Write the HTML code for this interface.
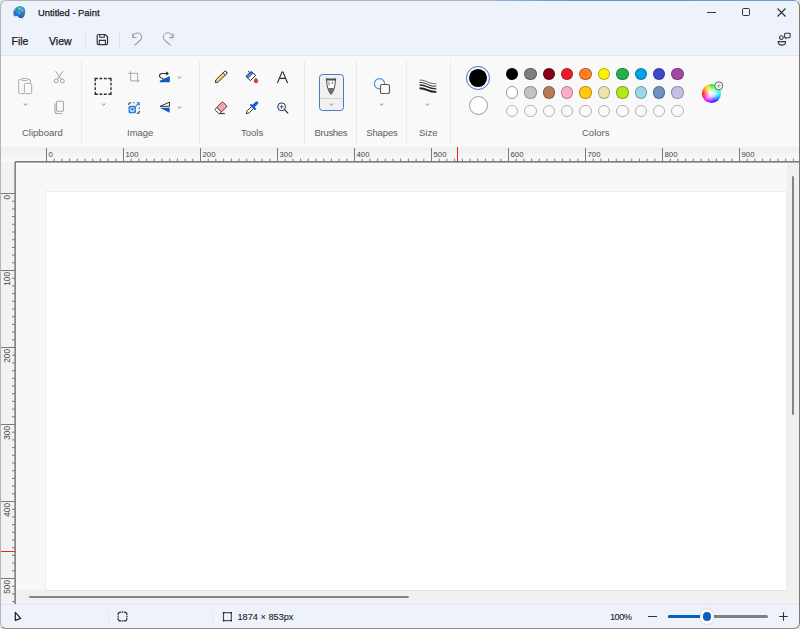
<!DOCTYPE html>
<html><head><meta charset="utf-8">
<style>
*{margin:0;padding:0;box-sizing:border-box}
html,body{width:800px;height:629px;overflow:hidden;background:#e6e6e8;font-family:"Liberation Sans",sans-serif}
#win{position:absolute;left:0;top:0;width:800px;height:629px;background:#eef2fa;border-radius:5px 5px 5px 5px;overflow:hidden}
#frame{position:absolute;left:0;top:0;width:800px;height:629px;border:1px solid #b4b4b6;border-right-color:#7f7a68;border-bottom-color:#8e8b80;border-radius:6px;pointer-events:none}
.t{position:absolute;white-space:nowrap;color:#1b1b1b;line-height:1;-webkit-text-stroke:0.25px currentColor}
.ic{position:absolute;overflow:visible}
#ribbon{position:absolute;left:0;top:55px;width:800px;height:92px;background:#f9f9f9;border-top:1px solid #e4e8ee}
.sep{position:absolute;width:1px;background:#ececec}
.lbl{position:absolute;font-size:9.5px;color:#5c5c5c;white-space:nowrap;top:128.4px;line-height:1}
#rulerH{position:absolute;left:0;top:147px;width:800px;height:16px;background:linear-gradient(#f1f1f1 0,#f2f2f2 30%,#f9f9f9 85%)}
#rulerV{position:absolute;left:0;top:162px;width:16px;height:442px;background:#f2f2f2}
#work{position:absolute;left:16px;top:163px;width:783px;height:441px;background:#f8f8f8}
#canvas{position:absolute;left:46px;top:192px;width:740px;height:398px;background:#fff;box-shadow:0 0 0 0.6px rgba(0,0,0,.09)}
#status{position:absolute;left:0;top:604px;width:800px;height:25px;background:#eef2fa;border-top:1px solid #e4e7ed}
.sw{position:absolute;width:12px;height:12px;border-radius:50%;border:1px solid rgba(0,0,0,.18)}
.so{border:1px solid #a5a5a5;background:#fafafa}
.chev{position:absolute;width:5px;height:3px}
</style></head>
<body>
<div id="win">
  <!-- title bar -->
  <svg class="ic" style="left:12px;top:5px" width="16" height="14" viewBox="0 0 16 14">
    <defs><linearGradient id="pg" x1="0" y1="0" x2="0.3" y2="1"><stop offset="0" stop-color="#3cbaf2"/><stop offset="0.55" stop-color="#1e9be8"/><stop offset="1" stop-color="#0a62d2"/></linearGradient></defs>
    <path d="M1.2 9 C0.8 6 2.5 2.5 6.5 1.2 C9.5 0.3 12.3 1.5 13 4.5 C13.4 6.5 13.2 9.5 11.8 11.8 C10.8 13.2 8.5 13.5 7 12.6 C6.2 12 6 11 5.2 10.9 C4.3 10.8 3.6 11.6 2.6 11.2 C1.8 10.9 1.3 10 1.2 9Z" fill="url(#pg)"/>
    <circle cx="3.3" cy="7.7" r="1.15" fill="#f01818"/>
    <circle cx="4.8" cy="4.6" r="1.05" fill="#1c9a1c"/>
    <path d="M6.8 3.3 A1.1 1.1 0 0 0 8.7 4.3 L9.2 3Z" fill="#f7b500"/>
    <circle cx="7.6" cy="3.7" r="1" fill="#f7b500"/>
    <ellipse cx="7.4" cy="8.3" rx="0.5" ry="0.8" fill="#cfeaff"/>
    <rect x="9.8" y="6.2" width="1.2" height="7.2" fill="#c8561a"/>
    <path d="M9.3 5.3 H11.6 L10.9 6.6 H10Z" fill="#e8b888"/>
  </svg>
  <div class="t" style="left:38px;top:8.3px;font-size:9.4px">Untitled - Paint</div>
  <!-- window controls -->
  <div style="position:absolute;left:707px;top:11.5px;width:8.5px;height:1.2px;background:#333"></div>
  <div style="position:absolute;left:742px;top:8px;width:8.2px;height:7.8px;border:1.2px solid #333;border-radius:1.5px"></div>
  <svg class="ic" style="left:777px;top:7.5px" width="9" height="9" viewBox="0 0 9 9"><path d="M0.5 0.5 L8.5 8.5 M8.5 0.5 L0.5 8.5" stroke="#2b2b2b" stroke-width="1.1"/></svg>

  <!-- menu -->
  <div class="t" style="left:11.5px;top:36.4px;font-size:10.5px">File</div>
  <div class="t" style="left:49px;top:36.4px;font-size:10.5px">View</div>
  <div class="sep" style="left:85px;top:31px;height:17px;background:#dfe2e8"></div>
  <div class="sep" style="left:119px;top:31px;height:17px;background:#dfe2e8"></div>
  <!-- save -->
  <svg class="ic" style="left:96px;top:33px" width="13" height="13" viewBox="0 0 13 13">
    <path d="M2.3 1.5 H9.2 L11.5 3.8 V10.5 A1.1 1.1 0 0 1 10.4 11.6 H2.3 A1.1 1.1 0 0 1 1.2 10.5 V2.6 A1.1 1.1 0 0 1 2.3 1.5Z" fill="none" stroke="#333" stroke-width="1.2"/>
    <path d="M3.8 1.6 V4.3 H8.3 V1.6" fill="none" stroke="#333" stroke-width="1.1"/>
    <path d="M3.3 11.5 V7.4 H9.4 V11.5" fill="none" stroke="#333" stroke-width="1.1"/>
  </svg>
  <!-- undo -->
  <svg class="ic" style="left:131px;top:32px" width="14" height="14" viewBox="0 0 14 14">
    <path d="M2 5.3 A4.3 4.3 0 0 1 10.6 5.3 C10.6 6.5 10.2 7.2 9.4 8 L4 13" fill="none" stroke="#9d9d9d" stroke-width="1.1" stroke-linecap="round"/>
    <path d="M1.8 1.8 V5.5 H5" fill="none" stroke="#9d9d9d" stroke-width="1.1" stroke-linecap="round" stroke-linejoin="round"/>
  </svg>
  <!-- redo -->
  <svg class="ic" style="left:160px;top:32px" width="15" height="14" viewBox="0 0 15 14">
    <path d="M12.5 5.4 A4.6 4.6 0 0 0 3.3 5.4 C3.3 6.6 3.8 7.3 4.6 8.1 L10.2 13" fill="none" stroke="#9d9d9d" stroke-width="1.1" stroke-linecap="round"/>
    <path d="M13.2 1.8 V5.6 H9.6" fill="none" stroke="#9d9d9d" stroke-width="1.1" stroke-linecap="round" stroke-linejoin="round"/>
  </svg>
  <!-- share -->
  <svg class="ic" style="left:777px;top:32px" width="15" height="15" viewBox="0 0 15 15">
    <circle cx="4.4" cy="5.6" r="1.9" fill="none" stroke="#333" stroke-width="1.05"/>
    <path d="M1.1 9.6 H8.6 C8.6 12 7 13.1 4.85 13.1 C2.7 13.1 1.1 12 1.1 9.6Z" fill="none" stroke="#333" stroke-width="1.1" stroke-linejoin="round"/>
    <path d="M8.3 1.3 H12.3 A0.8 0.8 0 0 1 13.1 2.1 V4.9 A0.8 0.8 0 0 1 12.3 5.7 H9.6 L8.6 6.6 V5.7 A0.8 0.8 0 0 1 7.6 4.9 V2.1 A0.8 0.8 0 0 1 8.3 1.3Z" fill="none" stroke="#333" stroke-width="1.05" stroke-linejoin="round"/>
  </svg>

  <div id="ribbon"></div>
  <div class="sep" style="left:81px;top:60px;height:85px"></div>
  <div class="sep" style="left:199px;top:60px;height:85px"></div>
  <div class="sep" style="left:304px;top:60px;height:85px"></div>
  <div class="sep" style="left:356px;top:60px;height:85px"></div>
  <div class="sep" style="left:406px;top:60px;height:85px"></div>
  <div class="sep" style="left:450px;top:60px;height:85px"></div>

  <!-- clipboard group -->
  <svg class="ic" style="left:17px;top:77px" width="17" height="18" viewBox="0 0 17 18">
    <path d="M4.4 2.4 H3.3 A1.6 1.6 0 0 0 1.7 4 V15 A1.6 1.6 0 0 0 3.3 16.6 H7" fill="none" stroke="#ababab" stroke-width="1"/>
    <path d="M10.6 2.4 H11.8 A1.6 1.6 0 0 1 13.4 4 V5.8" fill="none" stroke="#ababab" stroke-width="1"/>
    <rect x="4.6" y="1.5" width="6" height="2.1" rx="1" fill="none" stroke="#ababab" stroke-width="1"/>
    <rect x="7.4" y="6.4" width="7.3" height="10.2" rx="1.3" fill="none" stroke="#ababab" stroke-width="1"/>
  </svg>
  <svg class="chev" style="left:23px;top:103px" width="6" height="4" viewBox="0 0 6 4"><path d="M0.6 0.7 L3 3 L5.4 0.7" fill="none" stroke="#666" stroke-width="1.05"/></svg>
  <svg class="ic" style="left:53px;top:70px" width="13" height="14" viewBox="0 0 13 14">
    <path d="M2.6 1.1 L8.1 9.3 M10 1.1 L4.5 9.3" fill="none" stroke="#9e9e9e" stroke-width="0.95"/>
    <circle cx="3.3" cy="10.9" r="1.95" fill="none" stroke="#9e9e9e" stroke-width="0.95"/>
    <circle cx="9.3" cy="10.9" r="1.95" fill="none" stroke="#9e9e9e" stroke-width="0.95"/>
  </svg>
  <svg class="ic" style="left:53px;top:100px" width="12" height="15" viewBox="0 0 12 15">
    <rect x="3.5" y="1.2" width="7" height="10" rx="1.3" fill="none" stroke="#a9a9a9" stroke-width="1.1"/>
    <path d="M2 3.5 V11.5 A2 2 0 0 0 4 13.5 H9" fill="none" stroke="#a9a9a9" stroke-width="1.1"/>
  </svg>

  <!-- image group -->
  <svg class="ic" style="left:94px;top:77px" width="19" height="19" viewBox="0 -0.3 19 19">
    <path d="M1.25 3.85 V1.25 H3.85 M14.34 1.25 H16.95 V3.85 M16.95 14.34 V16.95 H14.34 M3.85 16.95 H1.25 V14.34 M5.48 1.25 H8.28 M5.48 16.95 H8.28 M1.25 5.48 V8.28 M16.95 5.48 V8.28 M9.91 1.25 H12.71 M9.91 16.95 H12.71 M1.25 9.91 V12.71 M16.95 9.91 V12.71" fill="none" stroke="#2e2e2e" stroke-width="1.4"/>
  </svg>
  <svg class="chev" style="left:101px;top:103px" width="6" height="4" viewBox="0 0 6 4"><path d="M0.6 0.7 L3 3 L5.4 0.7" fill="none" stroke="#666" stroke-width="1.05"/></svg>
  <svg class="ic" style="left:127px;top:70px" width="14" height="14" viewBox="0 0 14 14">
    <path d="M1.2 3.3 H10.6 V12.5 M3.6 1.2 V10.8 H12.9" fill="none" stroke="#a9a9a9" stroke-width="1"/>
  </svg>
  <svg class="ic" style="left:158px;top:70px" width="14" height="14" viewBox="0 0 14 14">
    <path d="M1.8 10.7 V12.2 H11.8 V6.1Z" fill="#0c5bc4"/>
    <path d="M5.3 8.6 C3.2 8.2 1.4 7.3 1.5 5.6 C1.6 4.1 3 3.5 4.6 3.5 H9.8" fill="none" stroke="#2a2a2a" stroke-width="1.1"/>
    <path d="M8.3 1.8 L10 3.5 L8.3 5.2" fill="none" stroke="#2a2a2a" stroke-width="1.15"/>
  </svg>
  <svg class="chev" style="left:177px;top:76px" width="6" height="4" viewBox="0 0 6 4"><path d="M0.6 0.7 L3 3 L5.4 0.7" fill="none" stroke="#666" stroke-width="1.05"/></svg>
  <svg class="ic" style="left:127px;top:101px" width="14" height="14" viewBox="0 0 14 14">
    <path d="M1.7 4 V3.5 A1.8 1.8 0 0 1 3.5 1.7 H4.3 M6.3 1.7 H7.5 M12.3 6.5 V7.7 M12.3 9.7 V10.5 A1.8 1.8 0 0 1 10.5 12.3 H9.8" fill="none" stroke="#333" stroke-width="1.1"/>
    <rect x="1.5" y="4.8" width="7.5" height="7.5" rx="1.6" fill="#2b7fdb"/>
    <circle cx="5.25" cy="8.5" r="2.1" fill="none" stroke="#fff" stroke-width="0.8"/>
    <path d="M3.6 10.6 L5.25 8.9 L6.9 10.6" fill="none" stroke="#fff" stroke-width="0.7"/>
    <path d="M8.6 5.4 L11.8 2.2 M9.6 1.8 H12.2 V4.4" fill="none" stroke="#2b7fdb" stroke-width="1.05"/>
  </svg>
  <svg class="ic" style="left:158px;top:100px" width="14" height="15" viewBox="0 0 14 15">
    <path d="M2.2 6.3 L11.5 2.1 V6.3Z" fill="none" stroke="#2a2a2a" stroke-width="0.95" stroke-linejoin="round"/>
    <path d="M1.8 7.8 H11.6 V12.8Z" fill="#0c5bc4"/>
  </svg>
  <svg class="chev" style="left:177px;top:106px" width="6" height="4" viewBox="0 0 6 4"><path d="M0.6 0.7 L3 3 L5.4 0.7" fill="none" stroke="#666" stroke-width="1.05"/></svg>

  <!-- tools group -->
  <svg class="ic" style="left:214px;top:70px" width="14" height="14" viewBox="0 0 14 14">
    <path d="M1.3 12.6 L1.84 9.85 L10.19 1.75 A1.6 1.6 0 0 1 12.41 4.05 L4.06 12.15Z" fill="#f6d27a" stroke="#2e2e2e" stroke-width="0.95" stroke-linejoin="round"/>
    <path d="M10.19 1.75 A1.6 1.6 0 0 1 12.41 4.05 L11.33 5.09 L9.11 2.79Z" fill="#fff" stroke="#2e2e2e" stroke-width="0.9"/>
  </svg>
  <svg class="ic" style="left:245px;top:69px" width="15" height="15" viewBox="0 0 15 15">
    <path d="M0.9 7.4 L6.2 2.5 L10.8 6.4 L5.4 11.6Z" fill="#fff"/>
    <path d="M0.9 7.4 L6.2 2.5 L8.5 4.45 L3.15 9.5Z" fill="#2f75d6"/>
    <path d="M2 8.4 L7.3 3.5" stroke="#9cc3f0" stroke-width="0.6"/>
    <path d="M0.9 7.4 L6.2 2.5 L10.8 6.4 L5.4 11.6Z" fill="none" stroke="#2a2a2a" stroke-width="1" stroke-linejoin="round"/>
    <path d="M3.2 1.8 L4.4 3.6" stroke="#2a2a2a" stroke-width="1"/>
    <path d="M11 9.1 C11.8 10.2 12.8 11 12.8 12.1 A1.8 1.8 0 0 1 9.2 12.1 C9.2 11 10.2 10.2 11 9.1Z" fill="#e2441a" stroke="#6a2a10" stroke-width="0.5"/>
  </svg>
  <svg class="ic" style="left:276px;top:70px" width="13" height="14" viewBox="0 0 13 14">
    <path d="M1.4 13 L6 2 H7 L11.6 13 M3.5 8.4 H9.5" fill="none" stroke="#2a2a2a" stroke-width="1.1"/>
  </svg>
  <svg class="ic" style="left:214px;top:100px" width="14" height="15" viewBox="0 0 14 15">
    <path d="M3 7.3 L1.5 8.9 A1.1 1.1 0 0 0 1.5 10.4 L4.6 13.3 A1.1 1.1 0 0 0 6.1 13.3 L7.4 11.7Z" fill="#fff" stroke="#2e2e2e" stroke-width="0.95" stroke-linejoin="round"/>
    <path d="M3.6 6.6 L7.7 2.4 A1.1 1.1 0 0 1 9.2 2.4 L12.5 5.6 A1.1 1.1 0 0 1 12.5 7.1 L8.1 11.2 A1.1 1.1 0 0 1 6.6 11.2 L3.6 8.2 A1.1 1.1 0 0 1 3.6 6.6Z" fill="#f4a6ac" stroke="#4e3434" stroke-width="0.95"/>
    <path d="M5.4 13.6 H10.9" stroke="#2a2a2a" stroke-width="1"/>
  </svg>
  <svg class="ic" style="left:245px;top:100px" width="15" height="15" viewBox="0 0 15 15">
    <path d="M1.3 13.6 L1.9 11.2 L7.2 5.9 L9.1 7.8 L3.8 13.1Z" fill="#fff" stroke="#2a2a2a" stroke-width="0.95" stroke-linejoin="round"/>
    <path d="M6.1 5 L10 8.9" stroke="#1561c8" stroke-width="2.1" stroke-linecap="round"/>
    <path d="M8.7 5.9 L11.7 2.9" stroke="#1561c8" stroke-width="3.1" stroke-linecap="round"/>
  </svg>
  <svg class="ic" style="left:276px;top:102px" width="13" height="13" viewBox="0 0 13 13">
    <circle cx="5.6" cy="4.8" r="3.9" fill="#fafafa" stroke="#2e2e2e" stroke-width="1"/>
    <path d="M8.5 7.7 L11.8 11" stroke="#2e2e2e" stroke-width="1.1" stroke-linecap="round"/>
    <path d="M5.6 2.9 V6.7 M3.7 4.8 H7.5" stroke="#1a66d0" stroke-width="1"/>
  </svg>

  <!-- brushes -->
  <div style="position:absolute;left:318.5px;top:73.8px;width:25.2px;height:37px;border:1.3px solid #4b79c7;border-radius:3.5px;background:#f1f1f1"></div>
  <div style="position:absolute;left:320px;top:97.8px;width:22px;height:1px;background:#d2d2d2"></div>
  <svg class="ic" style="left:325px;top:77px" width="12" height="19" viewBox="0 0 12 19">
    <path d="M1.7 3.2 C1.7 9.5 3.3 14.3 6 17.6 C8.7 14.3 10.3 9.5 10.3 3.2" fill="#fff" stroke="#4a4a4a" stroke-width="1"/>
    <path d="M2.9 11 H9.1 C8.6 13.6 7.6 15.4 6 17.1 C4.4 15.4 3.4 13.6 2.9 11Z" fill="#6e6e6e"/>
    <path d="M0.9 0.8 L1.8 1.6 H10.2 L11.1 0.8 V3.6 H0.9Z" fill="#4a4a4a"/>
    <path d="M4 4.6 V8.4 M7.3 4.6 V7.2" stroke="#6a6a6a" stroke-width="0.9"/>
  </svg>
  <svg class="chev" style="left:328.5px;top:103px" width="6" height="4" viewBox="0 0 6 4"><path d="M0.6 0.7 L3 3 L5.4 0.7" fill="none" stroke="#666" stroke-width="1.05"/></svg>

  <!-- shapes -->
  <svg class="ic" style="left:372px;top:77px" width="19" height="18" viewBox="0 0 19 18">
    <circle cx="7.5" cy="6.7" r="5.1" fill="none" stroke="#4a90dc" stroke-width="1.15"/>
    <rect x="8.5" y="7.5" width="9" height="9" rx="1.6" fill="#fafafa" stroke="#5a5a5a" stroke-width="1.15"/>
  </svg>
  <svg class="chev" style="left:379px;top:103px" width="6" height="4" viewBox="0 0 6 4"><path d="M0.6 0.7 L3 3 L5.4 0.7" fill="none" stroke="#666" stroke-width="1.05"/></svg>

  <!-- size -->
  <svg class="ic" style="left:418px;top:78px" width="20" height="16" viewBox="0 0 20 16">
    <path d="M1.6 2.1 C3.5 2.1 5.5 2.0 9.5 3.9000000000000004 C13.5 5.8 15.5 5.7 18.3 5.7" fill="none" stroke="#333" stroke-width="0.75"/>
    <path d="M1.6 4.5 C3.5 4.5 5.5 4.4 9.5 6.35 C13.5 8.299999999999999 15.5 8.2 18.3 8.2" fill="none" stroke="#333" stroke-width="1.0"/>
    <path d="M1.6 7.0 C3.5 7.0 5.5 6.9 9.5 8.9 C13.5 10.9 15.5 10.8 18.3 10.8" fill="none" stroke="#2a2a2a" stroke-width="1.35"/>
    <path d="M1.6 10.3 C3.5 10.3 5.5 10.200000000000001 9.5 12.100000000000001 C13.5 14.0 15.5 13.9 18.3 13.9" fill="none" stroke="#1e1e1e" stroke-width="1.9"/>
  </svg>
  <svg class="chev" style="left:425px;top:103px" width="6" height="4" viewBox="0 0 6 4"><path d="M0.6 0.7 L3 3 L5.4 0.7" fill="none" stroke="#666" stroke-width="1.05"/></svg>
  <!-- colors -->
  <div style="position:absolute;left:466.15px;top:65.9px;width:23.7px;height:23.7px;border-radius:50%;border:1.7px solid #3b6fc2;background:#fafafa"></div>
  <div style="position:absolute;left:469.1px;top:68.9px;width:17.8px;height:17.8px;border-radius:50%;background:#000"></div>
  <div style="position:absolute;left:468.8px;top:96px;width:19px;height:19px;border-radius:50%;background:#fff;border:1px solid #9c9c9c"></div>
  <div class="sw" style="left:505.80px;top:67.60px;width:12.4px;height:12.4px;background:#000000;border:1px solid rgba(0,0,0,.28)"></div>
  <div class="sw" style="left:524.20px;top:67.60px;width:12.4px;height:12.4px;background:#7f7f7f;border:1px solid rgba(0,0,0,.28)"></div>
  <div class="sw" style="left:542.60px;top:67.60px;width:12.4px;height:12.4px;background:#880015;border:1px solid rgba(0,0,0,.28)"></div>
  <div class="sw" style="left:561.00px;top:67.60px;width:12.4px;height:12.4px;background:#ed1c24;border:1px solid rgba(0,0,0,.28)"></div>
  <div class="sw" style="left:579.40px;top:67.60px;width:12.4px;height:12.4px;background:#ff7f27;border:1px solid rgba(0,0,0,.28)"></div>
  <div class="sw" style="left:597.80px;top:67.60px;width:12.4px;height:12.4px;background:#fff200;border:1px solid rgba(0,0,0,.28)"></div>
  <div class="sw" style="left:616.20px;top:67.60px;width:12.4px;height:12.4px;background:#22b14c;border:1px solid rgba(0,0,0,.28)"></div>
  <div class="sw" style="left:634.60px;top:67.60px;width:12.4px;height:12.4px;background:#00a2e8;border:1px solid rgba(0,0,0,.28)"></div>
  <div class="sw" style="left:653.00px;top:67.60px;width:12.4px;height:12.4px;background:#3f48cc;border:1px solid rgba(0,0,0,.28)"></div>
  <div class="sw" style="left:671.40px;top:67.60px;width:12.4px;height:12.4px;background:#a349a4;border:1px solid rgba(0,0,0,.28)"></div>
  <div class="sw" style="left:505.80px;top:86.20px;width:12.4px;height:12.4px;background:#ffffff;border:1px solid #9a9a9a"></div>
  <div class="sw" style="left:524.20px;top:86.20px;width:12.4px;height:12.4px;background:#c3c3c3;border:1px solid rgba(0,0,0,.28)"></div>
  <div class="sw" style="left:542.60px;top:86.20px;width:12.4px;height:12.4px;background:#b97a57;border:1px solid rgba(0,0,0,.28)"></div>
  <div class="sw" style="left:561.00px;top:86.20px;width:12.4px;height:12.4px;background:#ffaec9;border:1px solid rgba(0,0,0,.28)"></div>
  <div class="sw" style="left:579.40px;top:86.20px;width:12.4px;height:12.4px;background:#ffc90e;border:1px solid rgba(0,0,0,.28)"></div>
  <div class="sw" style="left:597.80px;top:86.20px;width:12.4px;height:12.4px;background:#efe4b0;border:1px solid rgba(0,0,0,.28)"></div>
  <div class="sw" style="left:616.20px;top:86.20px;width:12.4px;height:12.4px;background:#b5e61d;border:1px solid rgba(0,0,0,.28)"></div>
  <div class="sw" style="left:634.60px;top:86.20px;width:12.4px;height:12.4px;background:#99d9ea;border:1px solid rgba(0,0,0,.28)"></div>
  <div class="sw" style="left:653.00px;top:86.20px;width:12.4px;height:12.4px;background:#7092be;border:1px solid rgba(0,0,0,.28)"></div>
  <div class="sw" style="left:671.40px;top:86.20px;width:12.4px;height:12.4px;background:#c8bfe7;border:1px solid rgba(0,0,0,.28)"></div>
  <div class="sw" style="left:505.80px;top:104.50px;width:12.4px;height:12.4px;border:1px solid #b3b3b3;background:#fafafa"></div>
  <div class="sw" style="left:524.20px;top:104.50px;width:12.4px;height:12.4px;border:1px solid #b3b3b3;background:#fafafa"></div>
  <div class="sw" style="left:542.60px;top:104.50px;width:12.4px;height:12.4px;border:1px solid #b3b3b3;background:#fafafa"></div>
  <div class="sw" style="left:561.00px;top:104.50px;width:12.4px;height:12.4px;border:1px solid #b3b3b3;background:#fafafa"></div>
  <div class="sw" style="left:579.40px;top:104.50px;width:12.4px;height:12.4px;border:1px solid #b3b3b3;background:#fafafa"></div>
  <div class="sw" style="left:597.80px;top:104.50px;width:12.4px;height:12.4px;border:1px solid #b3b3b3;background:#fafafa"></div>
  <div class="sw" style="left:616.20px;top:104.50px;width:12.4px;height:12.4px;border:1px solid #b3b3b3;background:#fafafa"></div>
  <div class="sw" style="left:634.60px;top:104.50px;width:12.4px;height:12.4px;border:1px solid #b3b3b3;background:#fafafa"></div>
  <div class="sw" style="left:653.00px;top:104.50px;width:12.4px;height:12.4px;border:1px solid #b3b3b3;background:#fafafa"></div>
  <div class="sw" style="left:671.40px;top:104.50px;width:12.4px;height:12.4px;border:1px solid #b3b3b3;background:#fafafa"></div>
  <div style="position:absolute;left:701.7px;top:84px;width:19px;height:19px;border-radius:50%;background:conic-gradient(#22ee00 0deg,#00ff80 50deg,#00ffff 90deg,#0060ff 135deg,#2000ff 160deg,#9000ff 190deg,#ff00ff 225deg,#ff0060 250deg,#ff0000 270deg,#ff8000 300deg,#ffe000 330deg,#22ee00 360deg)"></div>
  <div style="position:absolute;left:701.7px;top:84px;width:19px;height:19px;border-radius:50%;background:radial-gradient(circle,#fff 0,rgba(255,255,255,.85) 20%,rgba(255,255,255,0) 70%)"></div>
  <svg class="ic" style="left:713.5px;top:81px" width="10" height="10" viewBox="0 0 10 10"><circle cx="4.8" cy="4.8" r="4" fill="#fafafa" stroke="#666" stroke-width="1"/><path d="M4.8 2.7 V6.9 M2.7 4.8 H6.9" stroke="#9a9a9a" stroke-width="0.9"/></svg>

  <div class="lbl" style="left:22px">Clipboard</div>
  <div class="lbl" style="left:127px">Image</div>
  <div class="lbl" style="left:241px">Tools</div>
  <div class="lbl" style="left:314.5px;letter-spacing:-0.3px">Brushes</div>
  <div class="lbl" style="left:366.3px;letter-spacing:-0.15px">Shapes</div>
  <div class="lbl" style="left:419px">Size</div>
  <div class="lbl" style="left:582px">Colors</div>

  <div id="rulerH"></div>
<svg id="hr" class="ic" style="left:0;top:147px" width="800" height="16" viewBox="0 147 800 16">
<rect x="15" y="161" width="785" height="1.6" fill="#7a7a7a"/>
<rect x="46.00" y="148" width="1" height="14" fill="#7a7a7a"/>
<text x="48.60" y="156.9" font-size="7.7" fill="#3f4350">0</text>
<rect x="53.70" y="158.6" width="1" height="3" fill="#7a7a7a"/>
<rect x="61.40" y="158.6" width="1" height="3" fill="#7a7a7a"/>
<rect x="69.10" y="158.6" width="1" height="3" fill="#7a7a7a"/>
<rect x="76.80" y="158.6" width="1" height="3" fill="#7a7a7a"/>
<rect x="84.50" y="158.6" width="1" height="3" fill="#7a7a7a"/>
<rect x="92.20" y="158.6" width="1" height="3" fill="#7a7a7a"/>
<rect x="99.90" y="158.6" width="1" height="3" fill="#7a7a7a"/>
<rect x="107.60" y="158.6" width="1" height="3" fill="#7a7a7a"/>
<rect x="115.30" y="158.6" width="1" height="3" fill="#7a7a7a"/>
<rect x="123.00" y="148" width="1" height="14" fill="#7a7a7a"/>
<text x="125.60" y="156.9" font-size="7.7" fill="#3f4350">100</text>
<rect x="130.70" y="158.6" width="1" height="3" fill="#7a7a7a"/>
<rect x="138.40" y="158.6" width="1" height="3" fill="#7a7a7a"/>
<rect x="146.10" y="158.6" width="1" height="3" fill="#7a7a7a"/>
<rect x="153.80" y="158.6" width="1" height="3" fill="#7a7a7a"/>
<rect x="161.50" y="158.6" width="1" height="3" fill="#7a7a7a"/>
<rect x="169.20" y="158.6" width="1" height="3" fill="#7a7a7a"/>
<rect x="176.90" y="158.6" width="1" height="3" fill="#7a7a7a"/>
<rect x="184.60" y="158.6" width="1" height="3" fill="#7a7a7a"/>
<rect x="192.30" y="158.6" width="1" height="3" fill="#7a7a7a"/>
<rect x="200.00" y="148" width="1" height="14" fill="#7a7a7a"/>
<text x="202.60" y="156.9" font-size="7.7" fill="#3f4350">200</text>
<rect x="207.70" y="158.6" width="1" height="3" fill="#7a7a7a"/>
<rect x="215.40" y="158.6" width="1" height="3" fill="#7a7a7a"/>
<rect x="223.10" y="158.6" width="1" height="3" fill="#7a7a7a"/>
<rect x="230.80" y="158.6" width="1" height="3" fill="#7a7a7a"/>
<rect x="238.50" y="158.6" width="1" height="3" fill="#7a7a7a"/>
<rect x="246.20" y="158.6" width="1" height="3" fill="#7a7a7a"/>
<rect x="253.90" y="158.6" width="1" height="3" fill="#7a7a7a"/>
<rect x="261.60" y="158.6" width="1" height="3" fill="#7a7a7a"/>
<rect x="269.30" y="158.6" width="1" height="3" fill="#7a7a7a"/>
<rect x="277.00" y="148" width="1" height="14" fill="#7a7a7a"/>
<text x="279.60" y="156.9" font-size="7.7" fill="#3f4350">300</text>
<rect x="284.70" y="158.6" width="1" height="3" fill="#7a7a7a"/>
<rect x="292.40" y="158.6" width="1" height="3" fill="#7a7a7a"/>
<rect x="300.10" y="158.6" width="1" height="3" fill="#7a7a7a"/>
<rect x="307.80" y="158.6" width="1" height="3" fill="#7a7a7a"/>
<rect x="315.50" y="158.6" width="1" height="3" fill="#7a7a7a"/>
<rect x="323.20" y="158.6" width="1" height="3" fill="#7a7a7a"/>
<rect x="330.90" y="158.6" width="1" height="3" fill="#7a7a7a"/>
<rect x="338.60" y="158.6" width="1" height="3" fill="#7a7a7a"/>
<rect x="346.30" y="158.6" width="1" height="3" fill="#7a7a7a"/>
<rect x="354.00" y="148" width="1" height="14" fill="#7a7a7a"/>
<text x="356.60" y="156.9" font-size="7.7" fill="#3f4350">400</text>
<rect x="361.70" y="158.6" width="1" height="3" fill="#7a7a7a"/>
<rect x="369.40" y="158.6" width="1" height="3" fill="#7a7a7a"/>
<rect x="377.10" y="158.6" width="1" height="3" fill="#7a7a7a"/>
<rect x="384.80" y="158.6" width="1" height="3" fill="#7a7a7a"/>
<rect x="392.50" y="158.6" width="1" height="3" fill="#7a7a7a"/>
<rect x="400.20" y="158.6" width="1" height="3" fill="#7a7a7a"/>
<rect x="407.90" y="158.6" width="1" height="3" fill="#7a7a7a"/>
<rect x="415.60" y="158.6" width="1" height="3" fill="#7a7a7a"/>
<rect x="423.30" y="158.6" width="1" height="3" fill="#7a7a7a"/>
<rect x="431.00" y="148" width="1" height="14" fill="#7a7a7a"/>
<text x="433.60" y="156.9" font-size="7.7" fill="#3f4350">500</text>
<rect x="438.70" y="158.6" width="1" height="3" fill="#7a7a7a"/>
<rect x="446.40" y="158.6" width="1" height="3" fill="#7a7a7a"/>
<rect x="454.10" y="158.6" width="1" height="3" fill="#7a7a7a"/>
<rect x="461.80" y="158.6" width="1" height="3" fill="#7a7a7a"/>
<rect x="469.50" y="158.6" width="1" height="3" fill="#7a7a7a"/>
<rect x="477.20" y="158.6" width="1" height="3" fill="#7a7a7a"/>
<rect x="484.90" y="158.6" width="1" height="3" fill="#7a7a7a"/>
<rect x="492.60" y="158.6" width="1" height="3" fill="#7a7a7a"/>
<rect x="500.30" y="158.6" width="1" height="3" fill="#7a7a7a"/>
<rect x="508.00" y="148" width="1" height="14" fill="#7a7a7a"/>
<text x="510.60" y="156.9" font-size="7.7" fill="#3f4350">600</text>
<rect x="515.70" y="158.6" width="1" height="3" fill="#7a7a7a"/>
<rect x="523.40" y="158.6" width="1" height="3" fill="#7a7a7a"/>
<rect x="531.10" y="158.6" width="1" height="3" fill="#7a7a7a"/>
<rect x="538.80" y="158.6" width="1" height="3" fill="#7a7a7a"/>
<rect x="546.50" y="158.6" width="1" height="3" fill="#7a7a7a"/>
<rect x="554.20" y="158.6" width="1" height="3" fill="#7a7a7a"/>
<rect x="561.90" y="158.6" width="1" height="3" fill="#7a7a7a"/>
<rect x="569.60" y="158.6" width="1" height="3" fill="#7a7a7a"/>
<rect x="577.30" y="158.6" width="1" height="3" fill="#7a7a7a"/>
<rect x="585.00" y="148" width="1" height="14" fill="#7a7a7a"/>
<text x="587.60" y="156.9" font-size="7.7" fill="#3f4350">700</text>
<rect x="592.70" y="158.6" width="1" height="3" fill="#7a7a7a"/>
<rect x="600.40" y="158.6" width="1" height="3" fill="#7a7a7a"/>
<rect x="608.10" y="158.6" width="1" height="3" fill="#7a7a7a"/>
<rect x="615.80" y="158.6" width="1" height="3" fill="#7a7a7a"/>
<rect x="623.50" y="158.6" width="1" height="3" fill="#7a7a7a"/>
<rect x="631.20" y="158.6" width="1" height="3" fill="#7a7a7a"/>
<rect x="638.90" y="158.6" width="1" height="3" fill="#7a7a7a"/>
<rect x="646.60" y="158.6" width="1" height="3" fill="#7a7a7a"/>
<rect x="654.30" y="158.6" width="1" height="3" fill="#7a7a7a"/>
<rect x="662.00" y="148" width="1" height="14" fill="#7a7a7a"/>
<text x="664.60" y="156.9" font-size="7.7" fill="#3f4350">800</text>
<rect x="669.70" y="158.6" width="1" height="3" fill="#7a7a7a"/>
<rect x="677.40" y="158.6" width="1" height="3" fill="#7a7a7a"/>
<rect x="685.10" y="158.6" width="1" height="3" fill="#7a7a7a"/>
<rect x="692.80" y="158.6" width="1" height="3" fill="#7a7a7a"/>
<rect x="700.50" y="158.6" width="1" height="3" fill="#7a7a7a"/>
<rect x="708.20" y="158.6" width="1" height="3" fill="#7a7a7a"/>
<rect x="715.90" y="158.6" width="1" height="3" fill="#7a7a7a"/>
<rect x="723.60" y="158.6" width="1" height="3" fill="#7a7a7a"/>
<rect x="731.30" y="158.6" width="1" height="3" fill="#7a7a7a"/>
<rect x="739.00" y="148" width="1" height="14" fill="#7a7a7a"/>
<text x="741.60" y="156.9" font-size="7.7" fill="#3f4350">900</text>
<rect x="746.70" y="158.6" width="1" height="3" fill="#7a7a7a"/>
<rect x="754.40" y="158.6" width="1" height="3" fill="#7a7a7a"/>
<rect x="762.10" y="158.6" width="1" height="3" fill="#7a7a7a"/>
<rect x="769.80" y="158.6" width="1" height="3" fill="#7a7a7a"/>
<rect x="777.50" y="158.6" width="1" height="3" fill="#7a7a7a"/>
<rect x="785.20" y="158.6" width="1" height="3" fill="#7a7a7a"/>
<rect x="792.90" y="158.6" width="1" height="3" fill="#7a7a7a"/>
<rect x="457" y="147" width="1" height="15" fill="#e8232a"/>
</svg>
  <div id="rulerV"></div>
<svg id="vr" class="ic" style="left:0;top:162px" width="16" height="442" viewBox="0 162 16 442">
<rect x="14.4" y="162" width="1.5" height="442" fill="#7a7a7a"/>
<rect x="1" y="193.00" width="14" height="1" fill="#7a7a7a"/>
<text transform="translate(10.4 194.80) rotate(-90)" text-anchor="end" font-size="8.4" fill="#3f4350">0</text>
<rect x="12" y="200.70" width="3" height="1" fill="#7a7a7a"/>
<rect x="12" y="208.40" width="3" height="1" fill="#7a7a7a"/>
<rect x="12" y="216.10" width="3" height="1" fill="#7a7a7a"/>
<rect x="12" y="223.80" width="3" height="1" fill="#7a7a7a"/>
<rect x="12" y="231.50" width="3" height="1" fill="#7a7a7a"/>
<rect x="12" y="239.20" width="3" height="1" fill="#7a7a7a"/>
<rect x="12" y="246.90" width="3" height="1" fill="#7a7a7a"/>
<rect x="12" y="254.60" width="3" height="1" fill="#7a7a7a"/>
<rect x="12" y="262.30" width="3" height="1" fill="#7a7a7a"/>
<rect x="1" y="270.00" width="14" height="1" fill="#7a7a7a"/>
<text transform="translate(10.4 271.80) rotate(-90)" text-anchor="end" font-size="8.4" fill="#3f4350">100</text>
<rect x="12" y="277.70" width="3" height="1" fill="#7a7a7a"/>
<rect x="12" y="285.40" width="3" height="1" fill="#7a7a7a"/>
<rect x="12" y="293.10" width="3" height="1" fill="#7a7a7a"/>
<rect x="12" y="300.80" width="3" height="1" fill="#7a7a7a"/>
<rect x="12" y="308.50" width="3" height="1" fill="#7a7a7a"/>
<rect x="12" y="316.20" width="3" height="1" fill="#7a7a7a"/>
<rect x="12" y="323.90" width="3" height="1" fill="#7a7a7a"/>
<rect x="12" y="331.60" width="3" height="1" fill="#7a7a7a"/>
<rect x="12" y="339.30" width="3" height="1" fill="#7a7a7a"/>
<rect x="1" y="347.00" width="14" height="1" fill="#7a7a7a"/>
<text transform="translate(10.4 348.80) rotate(-90)" text-anchor="end" font-size="8.4" fill="#3f4350">200</text>
<rect x="12" y="354.70" width="3" height="1" fill="#7a7a7a"/>
<rect x="12" y="362.40" width="3" height="1" fill="#7a7a7a"/>
<rect x="12" y="370.10" width="3" height="1" fill="#7a7a7a"/>
<rect x="12" y="377.80" width="3" height="1" fill="#7a7a7a"/>
<rect x="12" y="385.50" width="3" height="1" fill="#7a7a7a"/>
<rect x="12" y="393.20" width="3" height="1" fill="#7a7a7a"/>
<rect x="12" y="400.90" width="3" height="1" fill="#7a7a7a"/>
<rect x="12" y="408.60" width="3" height="1" fill="#7a7a7a"/>
<rect x="12" y="416.30" width="3" height="1" fill="#7a7a7a"/>
<rect x="1" y="424.00" width="14" height="1" fill="#7a7a7a"/>
<text transform="translate(10.4 425.80) rotate(-90)" text-anchor="end" font-size="8.4" fill="#3f4350">300</text>
<rect x="12" y="431.70" width="3" height="1" fill="#7a7a7a"/>
<rect x="12" y="439.40" width="3" height="1" fill="#7a7a7a"/>
<rect x="12" y="447.10" width="3" height="1" fill="#7a7a7a"/>
<rect x="12" y="454.80" width="3" height="1" fill="#7a7a7a"/>
<rect x="12" y="462.50" width="3" height="1" fill="#7a7a7a"/>
<rect x="12" y="470.20" width="3" height="1" fill="#7a7a7a"/>
<rect x="12" y="477.90" width="3" height="1" fill="#7a7a7a"/>
<rect x="12" y="485.60" width="3" height="1" fill="#7a7a7a"/>
<rect x="12" y="493.30" width="3" height="1" fill="#7a7a7a"/>
<rect x="1" y="501.00" width="14" height="1" fill="#7a7a7a"/>
<text transform="translate(10.4 502.80) rotate(-90)" text-anchor="end" font-size="8.4" fill="#3f4350">400</text>
<rect x="12" y="508.70" width="3" height="1" fill="#7a7a7a"/>
<rect x="12" y="516.40" width="3" height="1" fill="#7a7a7a"/>
<rect x="12" y="524.10" width="3" height="1" fill="#7a7a7a"/>
<rect x="12" y="531.80" width="3" height="1" fill="#7a7a7a"/>
<rect x="12" y="539.50" width="3" height="1" fill="#7a7a7a"/>
<rect x="12" y="547.20" width="3" height="1" fill="#7a7a7a"/>
<rect x="12" y="554.90" width="3" height="1" fill="#7a7a7a"/>
<rect x="12" y="562.60" width="3" height="1" fill="#7a7a7a"/>
<rect x="12" y="570.30" width="3" height="1" fill="#7a7a7a"/>
<rect x="1" y="578.00" width="14" height="1" fill="#7a7a7a"/>
<text transform="translate(10.4 579.80) rotate(-90)" text-anchor="end" font-size="8.4" fill="#3f4350">500</text>
<rect x="12" y="585.70" width="3" height="1" fill="#7a7a7a"/>
<rect x="12" y="593.40" width="3" height="1" fill="#7a7a7a"/>
<rect x="12" y="601.10" width="3" height="1" fill="#7a7a7a"/>
<rect x="1" y="551" width="14" height="1" fill="#e8232a"/>
</svg>
  <div id="work"></div>
  <div id="vtrack" style="position:absolute;left:787px;top:163px;width:12px;height:441px;background:#f0f0f0"></div>
  <div id="htrack" style="position:absolute;left:16px;top:590px;width:783px;height:14px;background:#f0f0f0"></div>
  <div id="canvas"></div>
  <div style="position:absolute;left:792px;top:175.5px;width:2.2px;height:239px;background:#858585;border-radius:1px"></div>
  <div style="position:absolute;left:28.5px;top:596.2px;width:380.5px;height:2px;background:#858585;border-radius:1px"></div>
  <div id="status"></div>
  <!-- status bar -->
  <svg class="ic" style="left:13px;top:610px" width="10" height="12" viewBox="0 0 10 12"><path d="M2.3 2.4 L7.7 8.3 L2.3 10.3Z" fill="none" stroke="#222" stroke-width="1.25" stroke-linejoin="round"/></svg>
  <div class="sep" style="left:107.5px;top:609px;height:16px;background:#e3e6ec"></div>
  <svg class="ic" style="left:117px;top:611px" width="11" height="11" viewBox="0 0 11 11"><path d="M1.1 3.6 A2.5 2.5 0 0 1 3.6 1.1 M7.4 1.1 A2.5 2.5 0 0 1 9.9 3.6 M9.9 7.4 A2.5 2.5 0 0 1 7.4 9.9 M3.6 9.9 A2.5 2.5 0 0 1 1.1 7.4 M5 1.1 H6 M5 9.9 H6 M1.1 5 V6 M9.9 5 V6" fill="none" stroke="#333" stroke-width="1.2" stroke-linecap="round"/></svg>
  <div class="sep" style="left:212px;top:609px;height:16px;background:#e3e6ec"></div>
  <svg class="ic" style="left:222px;top:611px" width="11" height="11" viewBox="0 0 11 11"><rect x="1.5" y="1.7" width="7.8" height="7.9" fill="none" stroke="#444" stroke-width="1.1"/><rect x="0.9" y="1" width="1.5" height="1.5" fill="#222"/><rect x="8.5" y="1" width="1.5" height="1.5" fill="#222"/><rect x="0.9" y="8.9" width="1.5" height="1.5" fill="#222"/><rect x="8.5" y="8.9" width="1.5" height="1.5" fill="#222"/></svg>
  <div class="t" style="left:237.5px;top:613px;font-size:9.2px;color:#222;-webkit-text-stroke:0.1px #222">1874 × 853px</div>
  <div class="t" style="left:610px;top:613px;font-size:9.2px;color:#222;letter-spacing:-0.5px;-webkit-text-stroke:0.1px #222">100%</div>
  <div style="position:absolute;left:648px;top:616px;width:9px;height:1.1px;background:#333"></div>
  <div style="position:absolute;left:668px;top:615.2px;width:100px;height:3px;border-radius:1.5px;background:#7f7f7f"></div>
  <div style="position:absolute;left:668px;top:615.2px;width:38px;height:3px;border-radius:1.5px;background:#0a5fc4"></div>
  <div style="position:absolute;left:699.55px;top:609.25px;width:14.5px;height:14.5px;border-radius:50%;background:#fff;box-shadow:0 0 1.5px rgba(0,0,0,.3)"></div>
  <div style="position:absolute;left:702.7px;top:612.4px;width:8.2px;height:8.2px;border-radius:50%;background:#0a5fc4"></div>
  <svg class="ic" style="left:779px;top:611.5px" width="9" height="9" viewBox="0 0 9 9"><path d="M4.5 0.3 V8.7 M0.3 4.5 H8.7" stroke="#333" stroke-width="1.1"/></svg>
</div>
<div id="frame"></div>
<div style="position:absolute;left:495px;top:0;width:300px;height:1px;background:linear-gradient(90deg,#8fb3d8,#5b95d2 30%,#6a9fd4)"></div>
</body></html>
